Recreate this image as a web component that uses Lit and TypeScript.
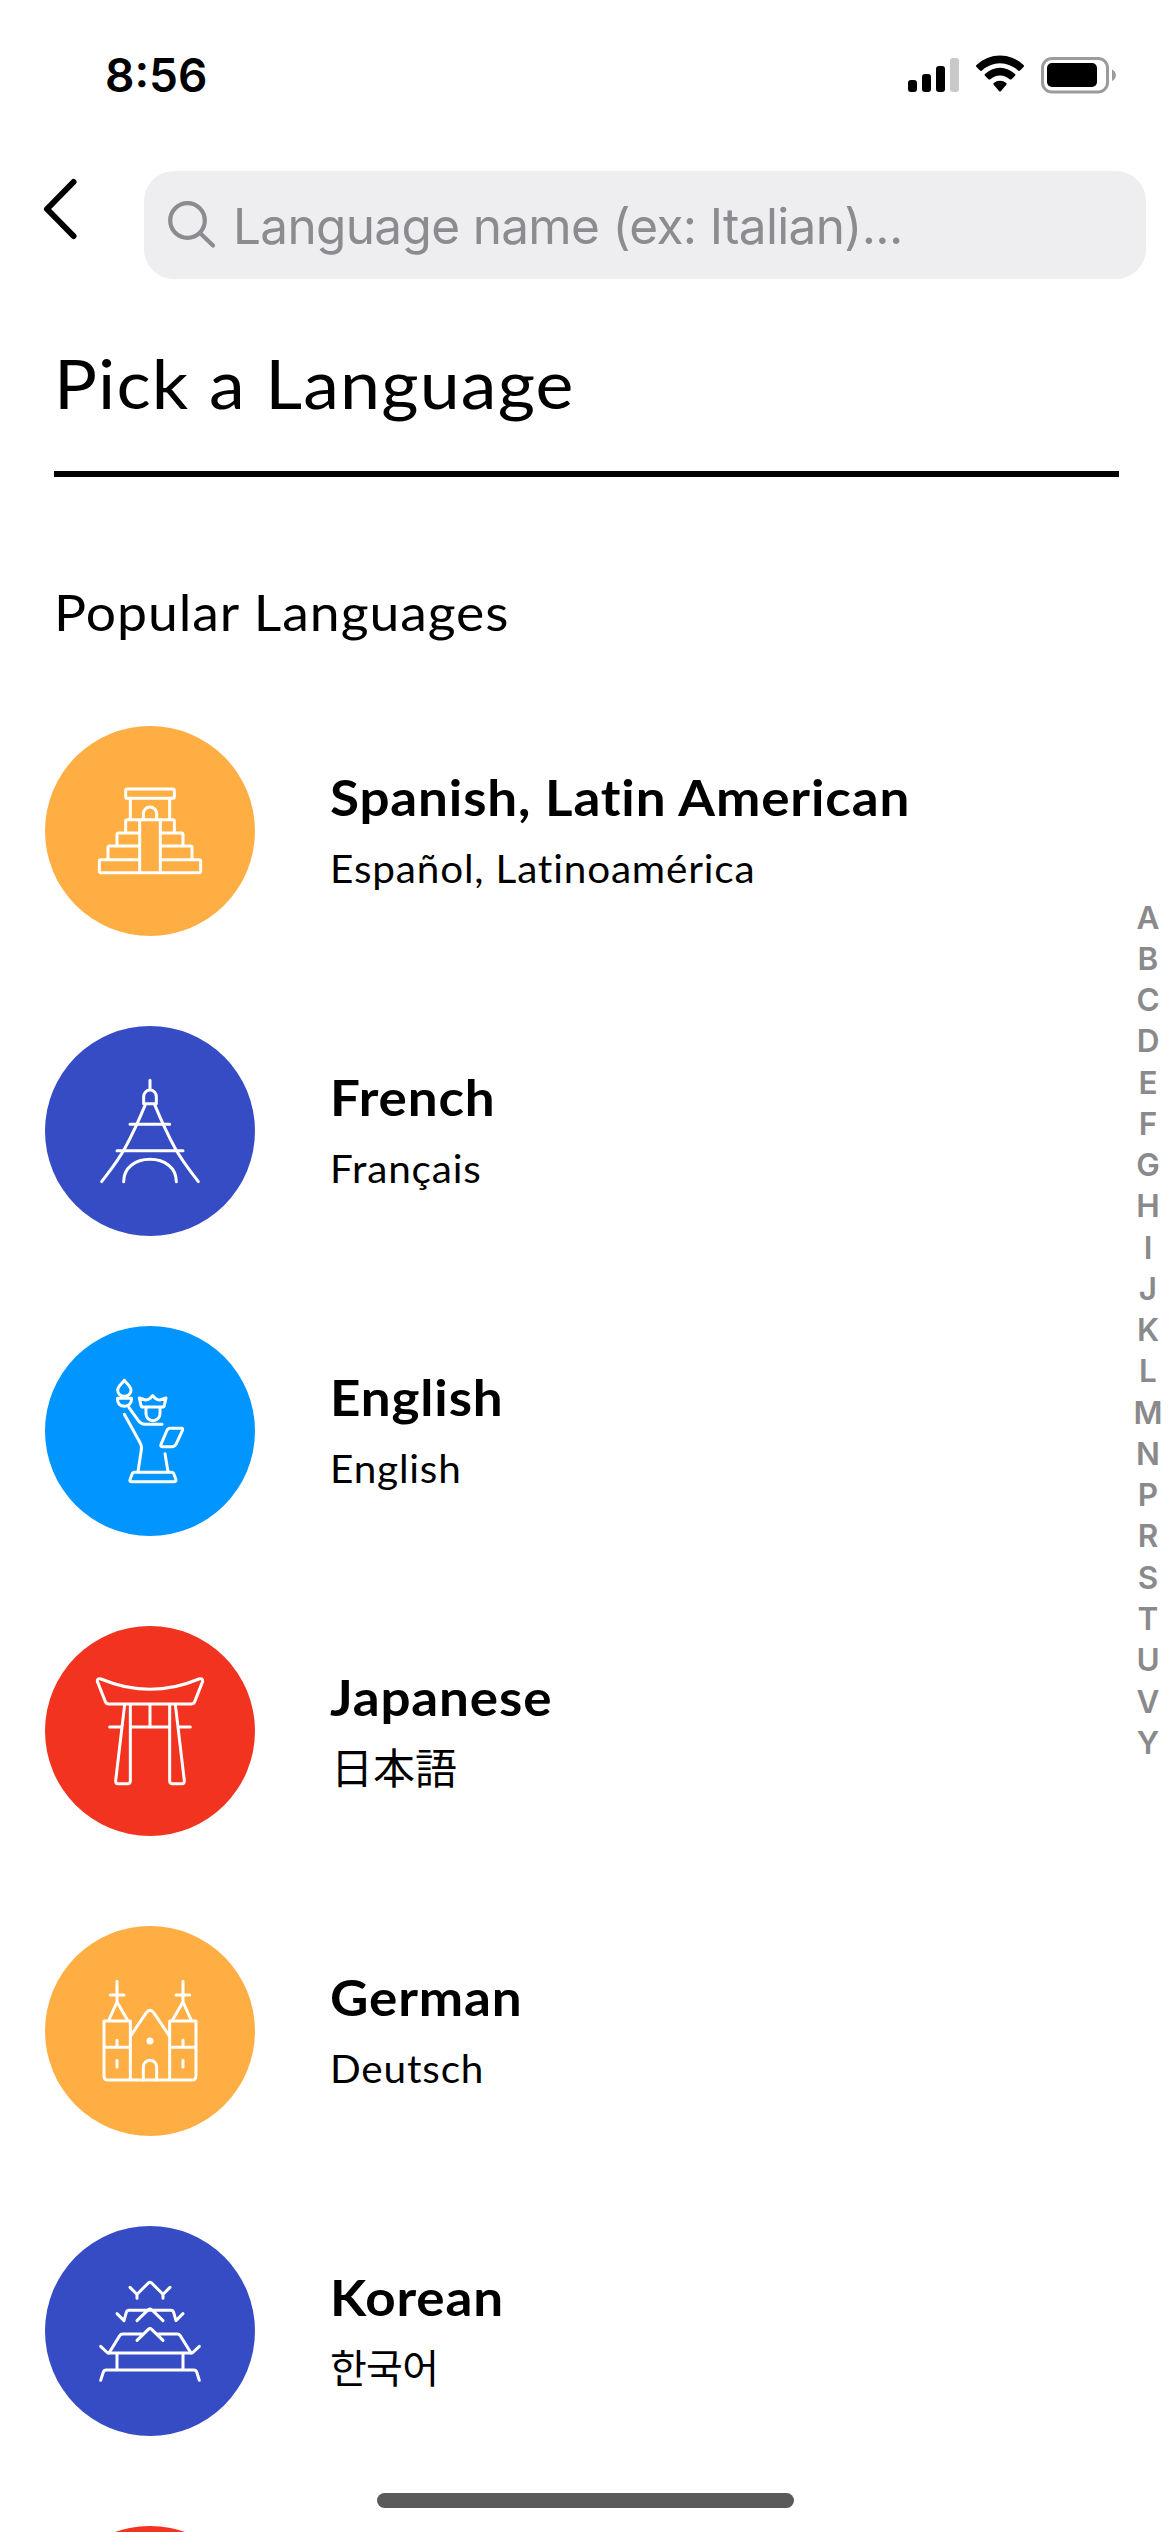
import { LitElement, html, svg, css, SVGTemplateResult } from "lit";
import { customElement, property } from "lit/decorators.js";

interface Language {
  name: string;
  native: string;
  tone: string;
  icon: string;
  script?: string;
}

const ICONS: Record<string, SVGTemplateResult> = {
  pyramid: svg`
    <rect x="257" y="207" width="146" height="28" rx="5"/>
    <path d="M271 235V298M389 235V298M310 298V281a20 20 0 0 1 40 0V298"/>
    <path d="M257 337V304q0-5 5-5H398q5 0 5 5V337M299 299V457M361 299V457"/>
    <path d="M299 339H236q-5 0-5 5V377M361 339H424q5 0 5 5V377"/>
    <path d="M299 378H209q-5 0-5 5V417M361 378H451q5 0 5 5V417"/>
    <path d="M299 419H183q-5 0-5 5V453q0 5 5 5H477q5 0 5-5V424q0-5-5-5H361"/>`,
  eiffel: svg`
    <path d="M330 181V209M311 251V230a19 20 0 0 1 38 0V251ZM270 313H389M231 392H429"/>
    <path d="M316 254C292 312 275 348 255 384C233 424 207 456 185 485M344 254C368 312 385 348 405 384C427 424 453 456 475 485"/>
    <path d="M251 485C251 443 286 418 330 418C374 418 409 443 409 485"/>`,
  liberty: svg`
    <path d="M253 181C247 190 233 199 233 211a20 18 0 0 0 40 0C273 199 259 190 253 181ZM232 235H275C275 250 266 259 253 259C240 259 232 250 232 235Z"/>
    <path d="M298 234L317 240Q324 240 330 235L338 227L346 235Q352 240 359 240L378 234L373 256Q372 261 367 261H309Q304 261 303 256Z"/>
    <path d="M318 262V281a21 21 0 0 0 42 0V262M267 263L293 299Q302 313 316 313H366"/>
    <path d="M253 283L299 366Q306 376 304 390L294 455M375 401L384 455"/>
    <path d="M390 325H424Q430 325 427 332L408 373Q404 380 396 380H367Q360 380 363 373L380 333Q383 325 390 325Z"/>
    <path d="M284 457H393Q400 457 402 463L408 479Q409 485 402 485H275Q268 485 270 479L276 463Q278 457 284 457Z"/>`,
  torii: svg`
    <path d="M183 177Q330 239 477 177Q489 174 488 184L464 245Q461 252 454 252H206Q199 252 196 245L172 184Q171 174 183 177Z"/>
    <path d="M254 254L227 482Q227 491 234 491H263Q271 491 271 483V254M406 254L433 482Q433 491 426 491H397Q389 491 389 483V254M330 254V321M209 321H243M271 321H389M417 321H451"/>`,
  church: svg`
    <path d="M231 184V244M211 225H252M429 184V244M408 225H449M207 299L231 246L262 299M398 299L429 246L453 299"/>
    <path d="M192 303H271V480M389 480V303H468V467Q468 480 455 480H205Q192 480 192 467V303M192 382H271M389 382H468"/>
    <path d="M273 346L319 278Q330 264 341 278L387 346M310 480V441a20 20 0 0 1 40 0V480"/>
    <path d="M231 361V380M429 361V380M231 421V441M429 421V441"/>
    <circle cx="330" cy="363" r="6" fill="#fff"/>`,
  pagoda: svg`
    <path d="M270 202L287 219Q291 224 295 219L325 189Q330 185 335 189L365 219Q369 224 373 219L390 202M291 223V235M369 223V235"/>
    <path d="M231 281L252 302L259 277Q261 271 267 271H393Q399 271 401 277L408 302L429 281M291 302L325 269Q330 265 335 269L369 302"/>
    <path d="M291 361L325 328Q330 323 335 328L369 361M307 342H248Q242 342 239 347L207 399M353 342H412Q418 342 421 347L453 399"/>
    <path d="M182 379L203 399H457L478 379M231 400V450M429 400V450M182 481L190 456Q192 450 199 450H461Q468 450 470 456L478 481"/>`,
  none: svg``,
};

const LANGUAGES: Language[] = [
  { name: "Spanish, Latin American", native: "Español, Latinoamérica", tone: "orange", icon: "pyramid" },
  { name: "French", native: "Français", tone: "indigo", icon: "eiffel" },
  { name: "English", native: "English", tone: "blue", icon: "liberty" },
  { name: "Japanese", native: "日本語", tone: "red", icon: "torii", script: "ja" },
  { name: "German", native: "Deutsch", tone: "orange", icon: "church" },
  { name: "Korean", native: "한국어", tone: "indigo", icon: "pagoda", script: "ko" },
  { name: "", native: "", tone: "red", icon: "none" },
];

@customElement("status-bar")
export class StatusBar extends LitElement {
  static styles = css`
    :host {
      display: flex;
      align-items: center;
      justify-content: space-between;
      height: 149px;
      padding: 0 49px 0 105px;
      box-sizing: border-box;
    }
    .time {
      font: 600 46px/54px Inter, "Liberation Sans", sans-serif;
      letter-spacing: 0;
    }
    .indicators {
      display: block;
      width: 215px;
      height: 40px;
    }
  `;
  render() {
    return html`
      <span class="time">8:56</span>
      <svg class="indicators" viewBox="905 54 215 40">
        <rect x="907" y="79" width="9" height="12" rx="3"/>
        <rect x="921" y="73" width="9" height="18" rx="3"/>
        <rect x="935" y="65" width="9" height="26" rx="3"/>
        <rect x="949" y="57" width="9" height="34" rx="3" fill="#c9c9c9"/>
        <path d="M975.5 66Q974.500 65 975.500 64A34 34 0 0 1 1022.500 64Q1023.500 65 1022.500 66L1019 69.600Q1018 70.500 1017 69.600A26 26 0 0 0 981 69.600Q980 70.500 979 69.600Z"/>
        <path d="M984 74.800Q983 73.800 984 72.900A21.500 21.500 0 0 1 1014 72.900Q1015 73.800 1014 74.800L1010.600 78.200Q1009.600 79 1008.600 78.200A14 14 0 0 0 989.400 78.200Q988.400 79 987.400 78.200Z"/>
        <path d="M992.700 83.700Q991.800 82.700 992.800 81.900A9.800 9.800 0 0 1 1005.200 81.900Q1006.200 82.700 1005.300 83.700L999.800 90.200Q999 91 998.200 90.200Z"/>
        <rect x="1041.500" y="57.500" width="65" height="33.500" rx="9.500" fill="none" stroke="#9b9b9b" stroke-width="3"/>
        <rect x="1046" y="62" width="50" height="24" rx="5"/>
        <path d="M1111 68.500C1116.200 71 1116.200 77.500 1111 80Z" fill="#9b9b9b"/>
      </svg>
    `;
  }
}

@customElement("search-header")
export class SearchHeader extends LitElement {
  static styles = css`
    :host {
      display: flex;
      align-items: center;
      height: 152px;
      padding: 0 24px 0 40px;
      box-sizing: border-box;
    }
    .back {
      display: block;
      flex: none;
      width: 40px;
      height: 68px;
      margin: 0 64px 32px 0;
    }
    .field {
      display: flex;
      flex: 1;
      align-items: center;
      height: 108px;
      box-sizing: border-box;
      padding: 0 22px;
      border-radius: 30px;
      background: #eeeef0;
    }
    .glass {
      display: block;
      flex: none;
      width: 52px;
      height: 52px;
      margin-right: 15px;
    }
    .hint {
      padding-top: 1px;
      color: #8b8b90;
      font: 400 49.500px/60px Inter, "Liberation Sans", sans-serif;
      letter-spacing: -0.66px;
      white-space: nowrap;
    }
  `;
  render() {
    return html`
      <svg class="back" viewBox="0 0 40 68" fill="none" stroke="#000" stroke-width="6" stroke-linecap="round" stroke-linejoin="round">
        <path d="M33.500 7L7 34L33.500 61"/>
      </svg>
      <div class="field">
        <svg class="glass" viewBox="0 0 52 52" fill="none" stroke="#8b8b90" stroke-width="4.200" stroke-linecap="round">
          <circle cx="21.500" cy="21.500" r="17.300"/>
          <path d="M34.500 34.500L47 46.500"/>
        </svg>
        <span class="hint">Language name (ex: Italian)...</span>
      </div>
    `;
  }
}

@customElement("language-row")
export class LanguageRow extends LitElement {
  @property({ attribute: false }) language!: Language;

  static styles = css`
    :host {
      display: flex;
      flex: none;
      height: 210px;
    }
    .badge {
      flex: none;
      width: 210px;
      height: 210px;
      border-radius: 50%;
    }
    .orange { background: #ffae43; }
    .indigo { background: #364cc4; }
    .blue { background: #0095ff; }
    .red { background: #f1331f; }
    .glyph {
      display: block;
      width: 210px;
      height: 210px;
      fill: none;
      stroke: #fff;
      stroke-width: 9px;
      stroke-linecap: round;
      stroke-linejoin: round;
    }
    .labels {
      display: flex;
      flex-direction: column;
      align-items: flex-start;
      gap: 17px;
      padding: 41px 0 0 75px;
      font-family: Lato, "Noto Sans CJK JP", "Noto Sans CJK KR", sans-serif;
      white-space: nowrap;
      color: #000;
    }
    .name {
      height: 60px;
      font-size: 50px;
      line-height: 60px;
      font-weight: 700;
      letter-spacing: 0.8px;
      transform: scaleX(1.06);
      transform-origin: left;
    }
    .native {
      font-size: 39px;
      line-height: 48px;
      letter-spacing: 0.8px;
      transform: scaleX(1.038);
      transform-origin: left;
    }
    .ja {
      padding-left: 1px;
      font-size: 42px;
      letter-spacing: 0;
      transform: none;
    }
    .ko {
      font-family: Lato, "Noto Sans CJK KR", sans-serif;
      font-size: 40px;
      letter-spacing: -0.7px;
      transform: none;
    }
  `;
  render() {
    const { name, native, tone, icon, script } = this.language;
    return html`
      <div class="badge ${tone}">
        <svg class="glyph" viewBox="15 18 630 630">${ICONS[icon]}</svg>
      </div>
      <div class="labels">
        <span class="name">${name}</span>
        <span class="native ${script ?? ""}">${native}</span>
      </div>
    `;
  }
}

@customElement("app-root")
export class AppRoot extends LitElement {
  static styles = css`
    :host {
      display: block;
      position: relative;
      width: 1170px;
      height: 2532px;
      overflow: hidden;
      background: #fff;
      color: #000;
    }
    .heading {
      margin: 42px 51px 0 54px;
      padding-bottom: 48px;
      border-bottom: 6px solid #000;
      font: 400 67px/80px Lato, sans-serif;
      letter-spacing: 1.1px;
    }
    .subheading {
      margin: 105px 54px 0;
      font: 400 50px/60px Lato, sans-serif;
      letter-spacing: 0.9px;
    }
    .wide {
      display: block;
      transform: scaleX(1.07);
      transform-origin: left;
    }
    .content {
      display: flex;
      justify-content: space-between;
      height: 1890px;
    }
    .list {
      display: flex;
      flex-direction: column;
      gap: 90px;
      padding: 84px 0 0 45px;
    }
    .index {
      display: flex;
      flex-direction: column;
      align-items: center;
      width: 44px;
      padding-top: 254.500px;
      color: #8a8a8c;
      font: 600 31.500px/41.260px Inter, "Liberation Sans", sans-serif;
    }
    .home {
      position: absolute;
      left: 377px;
      top: 2493px;
      width: 417px;
      height: 15px;
      border-radius: 8px;
      background: #5a5a5a;
    }
  `;
  render() {
    return html`
      <status-bar></status-bar>
      <search-header></search-header>
      <div class="heading"><span class="wide">Pick a Language</span></div>
      <div class="subheading"><span class="wide">Popular Languages</span></div>
      <div class="content">
        <div class="list">
          ${LANGUAGES.map((l) => html`<language-row .language=${l}></language-row>`)}
        </div>
        <div class="index">
          ${[..."ABCDEFGHIJKLMNPRSTUVY"].map((c) => html`<span>${c}</span>`)}
        </div>
      </div>
      <div class="home"></div>
    `;
  }
}
